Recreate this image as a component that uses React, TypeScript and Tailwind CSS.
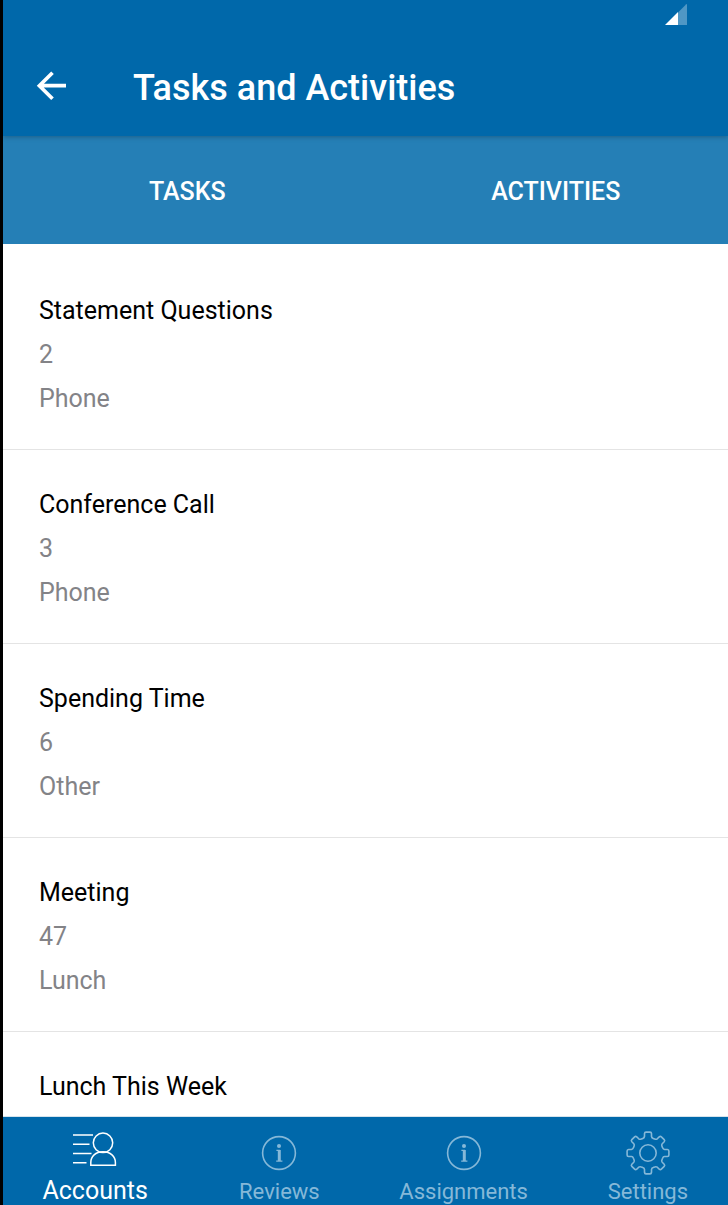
import React from "react";

type Entry = { title: string; count?: number; kind?: string };

const entries: Entry[] = [
  { title: "Statement Questions", count: 2, kind: "Phone" },
  { title: "Conference Call", count: 3, kind: "Phone" },
  { title: "Spending Time", count: 6, kind: "Other" },
  { title: "Meeting", count: 47, kind: "Lunch" },
  { title: "Lunch This Week" },
];

/** Outline of an eight-toothed gear centred on (22, 22). */
function gearOutline(): string {
  const parts: string[] = [];
  for (let i = 0; i < 8; i++) {
    const a = (i * Math.PI) / 4;
    const p = (u: number, v: number) =>
      `${(22 + u * Math.cos(a) + v * Math.sin(a)).toFixed(2)} ${(22 + u * Math.sin(a) - v * Math.cos(a)).toFixed(2)}`;
    parts.push(
      `${i === 0 ? "M" : "L"}${p(-5.2, 14.6)} Q${p(-3.6, 15.2)} ${p(-3.5, 16.6)} L${p(-3.5, 19.4)} Q${p(-3.4, 20.9)} ${p(-2, 20.9)}` +
        ` L${p(2, 20.9)} Q${p(3.4, 20.9)} ${p(3.5, 19.4)} L${p(3.5, 16.6)} Q${p(3.6, 15.2)} ${p(5.2, 14.6)}`
    );
  }
  return parts.join(" ") + "Z";
}

const gearPath = gearOutline();

function SignalIcon() {
  return (
    <svg className="h-[22px] w-[22px]" viewBox="0 0 22 22" aria-hidden="true">
      <path d="M22 0V21H13V8.5L21 0.5Z" fill="#4f97c5" />
      <path d="M13 8V21H0Z" fill="#fff" />
    </svg>
  );
}

function BackIcon() {
  return (
    <svg className="h-[30px] w-[30px]" viewBox="0 0 30 30" fill="none" stroke="#fff" strokeWidth="3.7" aria-hidden="true">
      <path d="M30 14.7H4M16.5 1.7L3.4 14.7L16.5 27.7" />
    </svg>
  );
}

function AccountsIcon() {
  return (
    <svg className="h-9 w-11" viewBox="1 0 44 36" fill="none" stroke="currentColor" strokeWidth="1.5" aria-hidden="true">
      <path d="M1 3H21M1 12.3H17.5M1 21.5H19.5M1 30.7H14.5" />
      <circle cx="31" cy="10.8" r="9.7" />
      <path d="M18.8 33.3V30.5C18.8 24.5 23.5 19.8 31 19.8S43.4 24.5 43.4 30.5V33.3Z" />
    </svg>
  );
}

function InfoIcon() {
  return (
    <svg className="h-9 w-9" viewBox="0 0 36 36" fill="none" stroke="currentColor" aria-hidden="true">
      <circle cx="18" cy="18" r="16.4" strokeWidth="1.6" />
      <circle cx="18" cy="11" r="2" fill="currentColor" stroke="none" />
      <path d="M18.3 15V26" strokeWidth="3" />
      <path d="M15.4 15.3H19M15.2 26.2H21.4" strokeWidth="1.2" />
    </svg>
  );
}

function SettingsIcon() {
  return (
    <svg className="h-11 w-11" viewBox="0 0 44 44" fill="none" stroke="currentColor" strokeWidth="1.6" aria-hidden="true">
      <path d={gearPath} strokeLinejoin="round" />
      <circle cx="22" cy="22" r="8.2" />
    </svg>
  );
}

const navItems = [
  { label: "Accounts", icon: <AccountsIcon />, active: true },
  { label: "Reviews", icon: <InfoIcon />, active: false },
  { label: "Assignments", icon: <InfoIcon />, active: false },
  { label: "Settings", icon: <SettingsIcon />, active: false },
];

export default function App() {
  return (
    <div className="flex h-screen flex-col overflow-hidden border-l-[3px] border-black bg-white font-['Roboto',sans-serif]">
      <header className="z-10 shrink-0 bg-[#0068aa] text-white shadow-[0_1px_5px_rgba(0,0,0,0.25)]">
        <div className="flex h-9 justify-end pt-1 pr-[41px]">
          <SignalIcon />
        </div>
        <div className="flex h-[100px] items-center gap-[67px] pl-[33px]">
          <button type="button" aria-label="Back" className="flex">
            <BackIcon />
          </button>
          <h1 className="pt-1 text-[36px] leading-10 font-medium">Tasks and Activities</h1>
        </div>
      </header>

      <div className="shrink-0 bg-[#257fb6]">
        <div role="tablist" className="-mr-3 flex h-[108px] text-[25px] font-medium text-white">
          <button type="button" role="tab" aria-selected="true" className="flex-1 pt-1">
            TASKS
          </button>
          <button type="button" role="tab" aria-selected="false" className="flex-1 pt-1">
            ACTIVITIES
          </button>
        </div>
      </div>

      <main className="min-h-0 flex-1 overflow-hidden pt-3">
        <ul>
          {entries.map((e) => (
            <li key={e.title} className="border-b border-[#e4e4e4] px-9 pt-[33px] pb-7 text-[25px] leading-[44px] text-[#838387]">
              <h2 className="text-black">{e.title}</h2>
              {e.count !== undefined && <p>{e.count}</p>}
              {e.kind && <p>{e.kind}</p>}
            </li>
          ))}
        </ul>
      </main>

      <nav className="shrink-0 border-t border-[#d5e3ec] bg-[#0068aa]">
        <div className="-mr-3 flex h-[88px]">
          {navItems.map((n) => (
            <a
              key={n.label}
              href="#"
              aria-current={n.active ? "page" : undefined}
              className={
                n.active
                  ? "flex flex-1 flex-col items-center text-[25px] text-white"
                  : "flex flex-1 flex-col items-center text-[22px] text-[#85b8d8]"
              }
            >
              <span className={n.active ? "flex h-[61px] items-center pt-1" : "flex h-[62px] items-center pt-[10px]"}>{n.icon}</span>
              <span className="leading-[26px]">{n.label}</span>
            </a>
          ))}
        </div>
      </nav>
    </div>
  );
}
